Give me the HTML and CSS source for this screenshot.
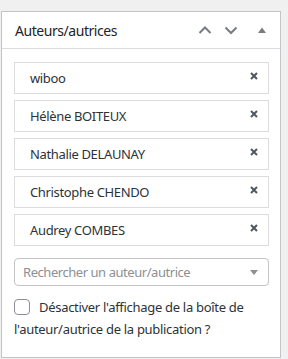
FILE: index.html
```html
<!DOCTYPE html>
<html lang="fr">
<head>
<meta charset="utf-8">
<link rel="stylesheet" href="styles.css">
</head>
<body>
<div class="panel">
  <div class="panel-header">
    <h2 class="panel-title">Auteurs/autrices</h2>
    <div class="panel-actions">
      <button class="icon-btn" aria-label="Monter">
        <svg width="14" height="14" viewBox="0 0 14 14"><path d="M1.5 10 L7 4.5 L12.5 10" fill="none" stroke="#787c82" stroke-width="2"/></svg>
      </button>
      <button class="icon-btn" aria-label="Descendre">
        <svg width="14" height="14" viewBox="0 0 14 14"><path d="M1.5 4.5 L7 10 L12.5 4.5" fill="none" stroke="#787c82" stroke-width="2"/></svg>
      </button>
      <button class="icon-btn toggle" aria-label="Replier">
        <svg width="8" height="6" viewBox="0 0 8 6"><path d="M0 6 L4 0.5 L8 6 Z" fill="#787c82"/></svg>
      </button>
    </div>
  </div>
  <div class="panel-body">
    <ul class="author-list">
      <li class="author"><span>wiboo</span><svg class="remove" width="8" height="8" viewBox="0 0 8 8"><path d="M1 1 L7 7 M7 1 L1 7" stroke="#50575e" stroke-width="2"/></svg></li>
      <li class="author"><span>Hélène BOITEUX</span><svg class="remove" width="8" height="8" viewBox="0 0 8 8"><path d="M1 1 L7 7 M7 1 L1 7" stroke="#50575e" stroke-width="2"/></svg></li>
      <li class="author"><span>Nathalie DELAUNAY</span><svg class="remove" width="8" height="8" viewBox="0 0 8 8"><path d="M1 1 L7 7 M7 1 L1 7" stroke="#50575e" stroke-width="2"/></svg></li>
      <li class="author"><span>Christophe CHENDO</span><svg class="remove" width="8" height="8" viewBox="0 0 8 8"><path d="M1 1 L7 7 M7 1 L1 7" stroke="#50575e" stroke-width="2"/></svg></li>
      <li class="author"><span>Audrey COMBES</span><svg class="remove" width="8" height="8" viewBox="0 0 8 8"><path d="M1 1 L7 7 M7 1 L1 7" stroke="#50575e" stroke-width="2"/></svg></li>
    </ul>
    <div class="search">
      <span class="placeholder">Rechercher un auteur/autrice</span>
      <svg width="8" height="5" viewBox="0 0 8 5"><path d="M0 0 L8 0 L4 5 Z" fill="#8c8f94"/></svg>
    </div>
    <label class="check">
      <span class="box"></span>Désactiver l'affichage de la boîte de l'auteur/autrice de la publication ?
    </label>
  </div>
</div>
</body>
</html>
```
FILE: styles.css
```css
* { box-sizing: border-box; }
html, body { margin: 0; padding: 0; }
body {
  background: #f0f0f1;
  font-family: "Noto Sans", "Open Sans", sans-serif;
  color: #1d2327;
  width: 288px;
  height: 359px;
  padding: 11px 7px 0 1px;
}
.panel {
  background: #fff;
  border: 1px solid #c3c4c7;
  width: 280px;
}
.panel-header {
  height: 37px;
  border-bottom: 1px solid #dcdcde;
  display: flex;
  align-items: center;
  justify-content: space-between;
  padding: 0 0 0 13px;
}
.panel-title {
  margin: 0;
  font-size: 14px;
  font-weight: 400;
  letter-spacing: -0.45px;
}
.panel-actions { display: flex; align-items: center; }
.icon-btn {
  border: 0;
  background: none;
  padding: 0;
  width: 26px;
  height: 36px;
  display: flex;
  align-items: center;
  justify-content: center;
}
.icon-btn.toggle { width: 36px; }
.panel-body { padding: 13px 11px 17px 12px; }
.author-list { list-style: none; margin: 0; padding: 0; }
.author {
  height: 32px;
  border: 1px solid #dcdcde;
  margin-bottom: 6px;
  display: flex;
  align-items: center;
  justify-content: space-between;
  padding: 0 10px 0 15px;
  font-size: 13px;
  letter-spacing: -0.35px;
  color: #2c3338;
}
.remove { margin-top: -5px; }
.search {
  margin-top: 12px;
  height: 28px;
  border: 1px solid #c3c4c7;
  border-radius: 4px;
  display: flex;
  align-items: center;
  justify-content: space-between;
  padding: 0 10px 0 8px;
  font-size: 13px;
  letter-spacing: -0.45px;
}
.placeholder { color: #8c8f94; }
.check {
  display: block;
  margin-top: 10px;
  font-size: 13px;
  line-height: 22px;
  letter-spacing: -0.3px;
  color: #2c3338;
}
.box {
  display: inline-block;
  width: 16px;
  height: 16px;
  border: 1px solid #8c8f94;
  border-radius: 4px;
  vertical-align: -3px;
  margin-right: 9px;
}
```
